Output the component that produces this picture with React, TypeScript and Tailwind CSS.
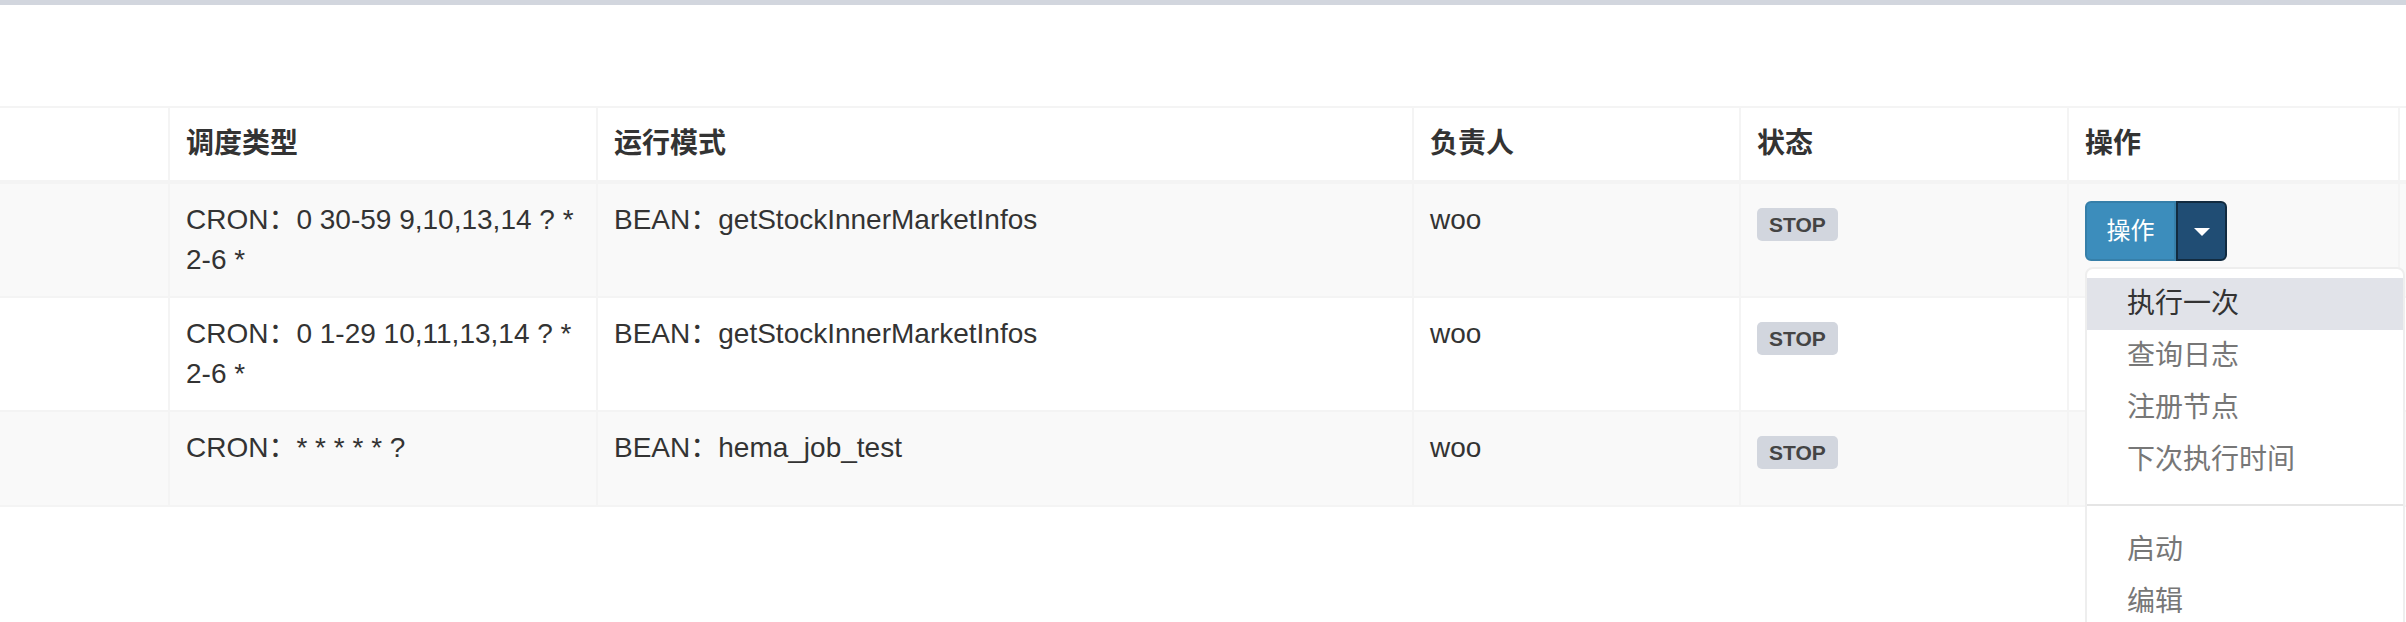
import React from "react";

type Row = { cron: string[]; bean: string; owner: string; striped: boolean; open?: boolean };

const rows: Row[] = [
  { cron: ["CRON：0 30-59 9,10,13,14 ? *", "2-6 *"], bean: "BEAN：getStockInnerMarketInfos", owner: "woo", striped: true, open: true },
  { cron: ["CRON：0 1-29 10,11,13,14 ? *", "2-6 *"], bean: "BEAN：getStockInnerMarketInfos", owner: "woo", striped: false },
  { cron: ["CRON：* * * * * ?"], bean: "BEAN：hema_job_test", owner: "woo", striped: true },
];

function ActionButton() {
  return (
    <div className="relative mt-[1px] flex w-fit">
      <div className="flex h-[60px] w-[91px] items-center justify-center rounded-l-[6px] border-2 border-[#367fa9] bg-[#3c8dbc] text-[24px] leading-[36px] text-white">
        操作
      </div>
      <div className="flex h-[60px] w-[51px] items-center justify-center rounded-r-[6px] border-2 border-[#122b40] bg-[#204d74]">
        <span className="mt-[2px] h-0 w-0 border-x-[8px] border-t-[8px] border-x-transparent border-t-white" />
      </div>
      <div className="absolute left-0 top-[66px] z-10 w-[320px] rounded-[8px] border-2 border-[#eeeeee] bg-white pb-[10px] pt-[9px]">
        <div className="h-[52px] bg-[#e1e3e9] px-[40px] py-[6px] text-[28px] leading-[40px] text-[#333]">执行一次</div>
        <div className="h-[52px] px-[40px] py-[6px] text-[28px] leading-[40px] text-[#777]">查询日志</div>
        <div className="h-[52px] px-[40px] py-[6px] text-[28px] leading-[40px] text-[#777]">注册节点</div>
        <div className="h-[52px] px-[40px] py-[6px] text-[28px] leading-[40px] text-[#777]">下次执行时间</div>
        <div className="my-[18px] h-[2px] bg-[#e5e5e5]" />
        <div className="h-[52px] px-[40px] py-[6px] text-[28px] leading-[40px] text-[#777]">启动</div>
        <div className="h-[52px] px-[40px] py-[6px] text-[28px] leading-[40px] text-[#777]">编辑</div>
      </div>
    </div>
  );
}

export default function App() {
  return (
    <div className="h-[622px] w-[2406px] overflow-hidden bg-white font-['Liberation_Sans','Noto_Sans_CJK_SC',sans-serif] text-[28px] leading-[40px] text-[#333]">
      <div className="h-[5px] bg-[#d2d6de]" />
      <div className="pt-[101px]">
        <div className="flex border-b-4 border-t-2 border-[#f4f4f4] bg-white font-bold">
          <div className="w-[170px] border-r-2 border-[#f4f4f4] p-4" />
          <div className="w-[428px] border-r-2 border-[#f4f4f4] p-4">调度类型</div>
          <div className="w-[816px] border-r-2 border-[#f4f4f4] p-4">运行模式</div>
          <div className="w-[327px] border-r-2 border-[#f4f4f4] p-4">负责人</div>
          <div className="w-[328px] border-r-2 border-[#f4f4f4] p-4">状态</div>
          <div className="w-[331px] border-r-2 border-[#f4f4f4] p-4">操作</div>
        </div>
        {rows.map((r, i) => (
          <div
            key={i}
            className={`flex border-b-2 border-[#f4f4f4] ${r.striped ? "bg-[#f9f9f9]" : "bg-white"}`}
          >
            <div className="w-[170px] border-r-2 border-[#f4f4f4] p-4" />
            <div className="w-[428px] border-r-2 border-[#f4f4f4] p-4">
              {r.cron.map((c, j) => (
                <div key={j} className="whitespace-nowrap">{c}</div>
              ))}
            </div>
            <div className="w-[816px] whitespace-nowrap border-r-2 border-[#f4f4f4] p-4">{r.bean}</div>
            <div className="w-[327px] border-r-2 border-[#f4f4f4] p-4">{r.owner}</div>
            <div className="w-[328px] border-r-2 border-[#f4f4f4] p-4">
              <div className="mt-[8px] flex h-[33px] w-fit items-center rounded-[5px] bg-[#d2d6de] px-[12px] text-[21px] font-bold leading-none text-[#444]">
                STOP
              </div>
            </div>
            <div className="w-[331px] border-r-2 border-[#f4f4f4] p-4">
              {r.open ? <ActionButton /> : <div className="mt-[1px] h-[60px] w-[142px]" />}
            </div>
          </div>
        ))}
      </div>
    </div>
  );
}
